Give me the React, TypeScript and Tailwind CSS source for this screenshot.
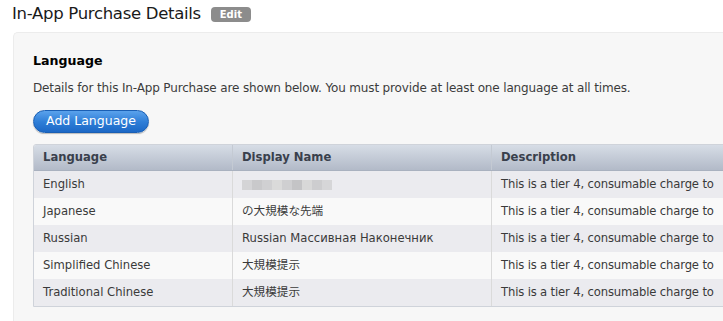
import React from 'react';

type Row = { language: string; display: string; description: string; blurred?: boolean };

const rows: Row[] = [
  { language: 'English', display: '', description: 'This is a tier 4, consumable charge to', blurred: true },
  { language: 'Japanese', display: 'の大規模な先端', description: 'This is a tier 4, consumable charge to' },
  { language: 'Russian', display: 'Russian Массивная Наконечник', description: 'This is a tier 4, consumable charge to' },
  { language: 'Simplified Chinese', display: '大規模提示', description: 'This is a tier 4, consumable charge to' },
  { language: 'Traditional Chinese', display: '大規模提示', description: 'This is a tier 4, consumable charge to' },
];

const blurShades = ['#d4d4d6', '#c9c9cb', '#d0d0d2', '#dadada', '#cfcfd1', '#c4c4c6', '#d8d8d8', '#cdcdcf', '#d6d6d8'];

const App: React.FC = () => {
  return (
    <div
      className="w-[723px] h-[321px] overflow-hidden bg-white text-[#333]"
      style={{ fontFamily: '"DejaVu Sans", "Noto Sans CJK JP", sans-serif' }}
    >
      {/* Title */}
      <div className="flex items-center h-[27px] pl-[12px] pt-[2px]">
        <h1 className="text-[16.5px] leading-none text-[#1a1a1a] tracking-[-0.3px]">In-App Purchase Details</h1>
        <span className="ml-[10px] h-[15px] w-[40px] flex items-center justify-center rounded-[4px] bg-[#8c8c8c] text-white text-[10px] font-bold">
          Edit
        </span>
      </div>

      {/* Panel */}
      <div className="ml-[13px] mt-[5px] w-[760px] rounded-tl-[5px] bg-[#f7f7f7] border-t border-l border-[#ececec] pl-[19px] pt-[19px] pb-[20px]">
        <h2 className="text-[12.6px] font-bold text-black leading-[18px]">Language</h2>
        <p className="mt-[10px] text-[12px] leading-[16px] text-[#3c3c3c] tracking-[-0.15px]">
          Details for this In-App Purchase are shown below. You must provide at least one language at all times.
        </p>
        <button className="mt-[14px] h-[23px] w-[116px] rounded-full border border-[#1a5fb4] bg-gradient-to-b from-[#5aa2ec] via-[#2f7fd8] to-[#1c68c6] text-white text-[12.5px] leading-none shadow-[0_1px_1px_rgba(0,0,0,0.25)]">
          Add Language
        </button>

        {/* Table */}
        <div className="mt-[11px] border border-[#cfd3da] rounded-tl-[3px] overflow-hidden text-[11.6px]">
          <div className="flex h-[26px] items-center bg-gradient-to-b from-[#d7dde6] to-[#b2bac8] font-bold text-[#39404c] border-b border-[#a9b1bf]">
            <div className="w-[199px] pl-[9px] border-r border-[#c4cad3] h-full flex items-center">Language</div>
            <div className="w-[259px] pl-[9px] border-r border-[#c4cad3] h-full flex items-center">Display Name</div>
            <div className="flex-1 pl-[9px] h-full flex items-center">Description</div>
          </div>
          {rows.map((row, i) => (
            <div
              key={row.language}
              className={`flex h-[27px] items-center text-[#3a3a3a] ${i % 2 === 0 ? 'bg-[#ebebef]' : 'bg-[#f9f9f9]'}`}
            >
              <div className="w-[199px] pl-[9px] border-r border-[#dadada] h-full flex items-center">{row.language}</div>
              <div className="w-[259px] pl-[9px] border-r border-[#dadada] h-full flex items-center">
                {row.blurred ? (
                  <div className="flex h-[10px]">
                    {blurShades.map((c, j) => (
                      <span key={j} className="w-[10px] h-full" style={{ backgroundColor: c }} />
                    ))}
                  </div>
                ) : (
                  row.display
                )}
              </div>
              <div className="flex-1 pl-[9px] h-full flex items-center whitespace-nowrap tracking-[-0.15px]">{row.description}</div>
            </div>
          ))}
        </div>
      </div>
    </div>
  );
};

export default App;
